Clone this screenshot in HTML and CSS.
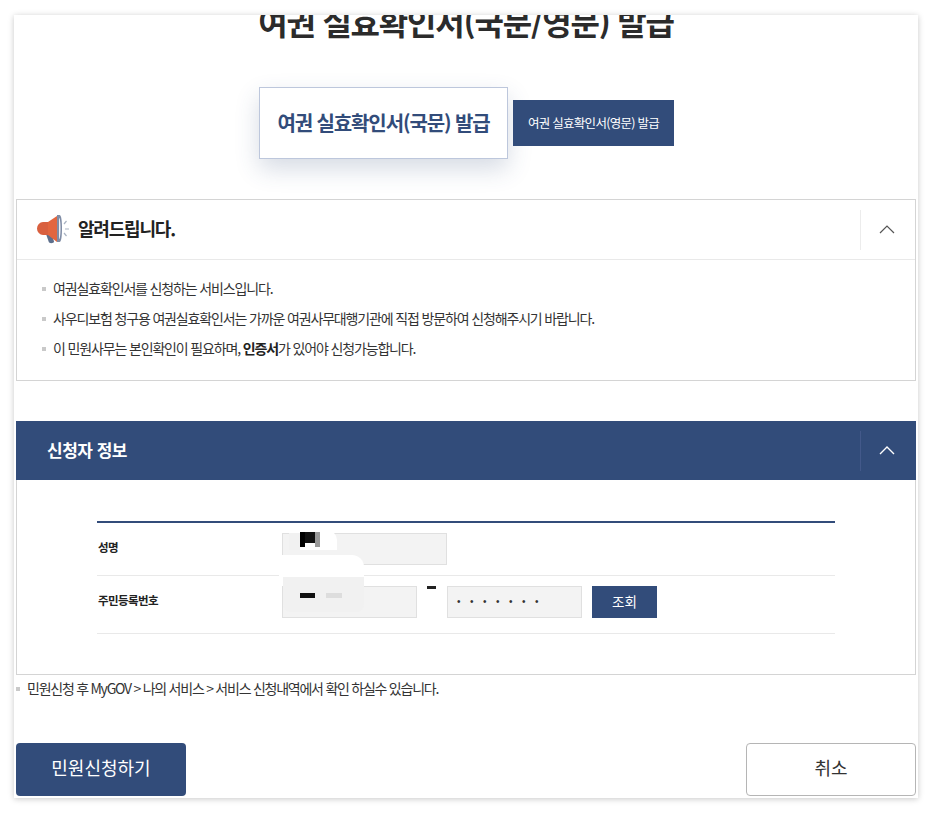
FILE: index.html
```html
<!DOCTYPE html>
<html lang="ko">
<head>
<meta charset="utf-8">
<title>여권 실효확인서 발급</title>
<link rel="stylesheet" href="styles.css">
</head>
<body>
<main class="card">
  <h1 class="title">여권 실효확인서(국문/영문) 발급</h1>
  <div class="tabs">
    <a class="tab tab-active">여권 실효확인서(국문) 발급</a>
    <a class="tab tab-other">여권 실효확인서(영문) 발급</a>
  </div>

  <section class="notice">
    <header class="notice-head">
      <svg class="mega" viewBox="0 0 34 30" width="34" height="30" aria-hidden="true">
        <path d="M10 20l6 1 2 6.500c.3 1.700-4.500 2.500-5.200.6z" fill="#5d6f8c"/>
        <path d="M7 8h6v13H7a6 6.500 0 0 1 0-13z" fill="#d9603f"/>
        <path d="M12 8l9-6v26l-9-7z" fill="#e2663f"/>
        <path d="M21 1h2.500c1.800 0 2.500 6 2.500 13.500S25.300 28 23.500 28H21z" fill="#7f8ca5"/>
        <path d="M23 4c1 0 1.500 5 1.500 10.500S24 25 23 25z" fill="#eef0f4"/>
        <path d="M28 10l2.500-3M29 15h4M28 19l2.500 3" stroke="#a9b3c2" stroke-width="1.200" fill="none"/>
      </svg>
      <h2 class="notice-title">알려드립니다.</h2>
      <span class="toggle toggle-light">
        <svg viewBox="0 0 16 9" width="16" height="9" aria-hidden="true"><path d="M1 8l7-7 7 7" fill="none" stroke="#555" stroke-width="1.200"/></svg>
      </span>
    </header>
    <ul class="notice-list">
      <li>여권실효확인서를 신청하는 서비스입니다.</li>
      <li>사우디보험 청구용 여권실효확인서는 가까운 여권사무대행기관에 직접 방문하여 신청해주시기 바랍니다.</li>
      <li>이 민원사무는 본인확인이 필요하며, <b>인증서</b>가 있어야 신청가능합니다.</li>
    </ul>
  </section>

  <section class="applicant">
    <header class="applicant-head">
      <h2 class="applicant-title">신청자 정보</h2>
      <span class="toggle toggle-dark">
        <svg viewBox="0 0 16 9" width="16" height="9" aria-hidden="true"><path d="M1 8l7-7 7 7" fill="none" stroke="#fff" stroke-width="1.400"/></svg>
      </span>
    </header>
    <div class="applicant-body">
      <div class="form">
        <div class="row row-name">
          <label class="label">성명</label>
          <div class="field field-name">
            <span class="box box-wide"></span>
            <span class="blur blur-name"><i class="px px-a"></i><i class="px px-b"></i><i class="px px-c"></i><i class="px px-f"></i></span>
          </div>
        </div>
        <div class="row row-id">
          <label class="label">주민등록번호</label>
          <div class="field field-id">
            <span class="box box-half"></span>
            <span class="dash"></span>
            <span class="box box-half box-dots">•••••••</span>
            <button class="lookup">조회</button>
            <span class="wipe"></span>
            <span class="blur blur-id"><i class="px px-d"></i><i class="px px-e"></i></span>
          </div>
        </div>
      </div>
    </div>
  </section>

  <p class="foot-note">민원신청 후 MyGOV &gt; 나의 서비스 &gt; 서비스 신청내역에서 확인 하실수 있습니다.</p>

  <div class="actions">
    <button class="btn btn-primary">민원신청하기</button>
    <button class="btn btn-cancel">취소</button>
  </div>
</main>
</body>
</html>
```

FILE: styles.css
```css
* { box-sizing: border-box; }
html, body { margin: 0; padding: 0; background: #fff; }
body {
  height: 814px;
  overflow: hidden;
  font-family: "Noto Sans CJK KR", "Noto Sans", sans-serif;
  color: #222;
  padding: 15px 15px 0 14px;
}
.card {
  width: 904px;
  height: 783px;
  padding: 0 2px;
  overflow: hidden;
  background: #fff;
  box-shadow: 0 1px 6px rgba(0, 0, 0, .22);
}
.title {
  margin: -16px 0 0;
  height: 49px;
  font-size: 32px;
  line-height: 44px;
  font-weight: 700;
  letter-spacing: -1.2px;
  text-align: center;
  color: #2b2b2b;
}
.tabs {
  display: flex;
  align-items: center;
  margin: 39px 0 0 243px;
  gap: 5px;
}
.tab { display: flex; align-items: center; justify-content: center; padding-bottom: 2px; }
.tab-active {
  width: 249px;
  height: 72px;
  background: #fff;
  border: 1px solid #bdc7dc;
  color: #324c7a;
  font-size: 20px;
  font-weight: 700;
  letter-spacing: -1.1px;
  box-shadow: 0 10px 24px rgba(50, 76, 122, .2);
}
.tab-other {
  width: 161px;
  height: 46px;
  background: #324c7a;
  color: #fff;
  font-size: 12.500px;
  letter-spacing: -.72px;
}
.notice {
  margin-top: 40px;
  height: 182px;
  border: 1px solid #d4d4d4;
}
.notice-head {
  display: flex;
  align-items: center;
  height: 60px;
  padding-left: 19px;
  border-bottom: 1px solid #e9e9e9;
}
.mega { flex: none; margin-bottom: 1px; }
.notice-title {
  margin: 0 0 3px 8px;
  flex: 1;
  font-size: 18px;
  font-weight: 700;
  letter-spacing: -1.2px;
  color: #222;
}
.toggle {
  flex: none;
  width: 56px;
  height: 40px;
  padding-right: 4px;
  display: flex;
  align-items: center;
  justify-content: center;
}
.toggle-light { border-left: 1px solid #ececec; margin-right: -1px; }
.toggle-dark { border-left: 1px solid #43598a; }
.notice-list {
  list-style: none;
  margin: 0;
  padding: 13px 0 0 25px;
}
.notice-list li {
  position: relative;
  height: 30px;
  padding-left: 11px;
  font-size: 14px;
  line-height: 30px;
  letter-spacing: -1.150px;
  color: #333;
}
.notice-list li::before {
  content: "";
  position: absolute;
  left: 0;
  top: 14px;
  width: 4px;
  height: 4px;
  background: #c9c9c9;
}
.notice-list b { font-weight: 700; color: #222; }
.applicant { margin-top: 40px; }
.applicant-head {
  display: flex;
  align-items: center;
  height: 59px;
  padding-left: 31px;
  background: #324c7a;
}
.applicant-title {
  margin: 0 0 2px;
  flex: 1;
  font-size: 17px;
  font-weight: 700;
  letter-spacing: -.5px;
  color: #fff;
}
.applicant-body {
  height: 195px;
  padding-top: 41px;
  border: 1px solid #d4d4d4;
  border-top: 0;
}
.form {
  width: 738px;
  margin-left: 80px;
  border-top: 2px solid #324c7a;
}
.row {
  display: flex;
  border-bottom: 1px solid #e9e9e9;
}
.row-name { height: 53px; padding-top: 10px; }
.row-id { height: 58px; padding-top: 10px; }
.label {
  flex: none;
  width: 185px;
  padding-left: 1px;
  font-size: 11.500px;
  font-weight: 700;
  line-height: 28px;
  letter-spacing: -.6px;
  color: #222;
}
.field { position: relative; display: flex; align-items: flex-start; }
.box {
  display: block;
  height: 32px;
  background: #f3f3f3;
  border: 1px solid #e0e0e0;
}
.box-wide { width: 165px; }
.box-half { width: 135px; }
.box-dots {
  padding-left: 9px;
  font-family: "Liberation Sans", sans-serif;
  font-size: 10px;
  line-height: 30px;
  letter-spacing: 9.500px;
  color: #333;
}
.dash {
  flex: none;
  width: 9px;
  height: 3px;
  margin: 0 11px 0 10px;
  background: #222;
}
.lookup {
  width: 65px;
  height: 32px;
  margin-left: 10px;
  padding-bottom: 3px;
  border: 0;
  background: #324c7a;
  color: #fff;
  font: 400 13.500px "Noto Sans CJK KR", sans-serif;
}
.blur { position: absolute; display: block; }
.blur-name { left: 7px; top: -3px; width: 48px; height: 20px; background: #fff; border-radius: 0 10px 0 0; }
.blur-id { left: 1px; top: -9px; width: 81px; height: 35px; background: #f1f1f1; border-radius: 0 0 8px 8px; }
.px { position: absolute; display: block; }
.px-a { left: 11px; top: 2px; width: 5px; height: 15px; background: #000; }
.px-b { left: 16px; top: 2px; width: 10px; height: 11px; background: #111; }
.px-c { left: 26px; top: 2px; width: 5px; height: 15px; background: #999; }
.px-f { left: 0; top: 3px; width: 11px; height: 17px; background: #f1f1f1; }
.px-d { left: 17px; top: 16px; width: 15px; height: 5px; background: #111; }
.px-e { left: 43px; top: 16px; width: 16px; height: 5px; background: #ddd; }
.wipe {
  position: absolute;
  left: -3px;
  top: -31px;
  width: 85px;
  height: 22px;
  background: #fff;
  border-radius: 0 12px 0 0;
}
.foot-note {
  position: relative;
  margin: 5px 0 0;
  height: 18px;
  padding-left: 11px;
  font-size: 14px;
  line-height: 16px;
  letter-spacing: -1.250px;
  color: #333;
}
.foot-note::before {
  content: "";
  position: absolute;
  left: 0;
  top: 7px;
  width: 4px;
  height: 4px;
  background: #c9c9c9;
}
.actions {
  display: flex;
  justify-content: space-between;
  margin-top: 45px;
}
.btn {
  width: 170px;
  height: 53px;
  padding-bottom: 6px;
  border-radius: 4px;
  font: 400 18px "Noto Sans CJK KR", sans-serif;
}
.btn-primary { border: 0; background: #324c7a; color: #fff; }
.btn-cancel { border: 1px solid #b5b5b5; background: #fff; color: #333; }
```
